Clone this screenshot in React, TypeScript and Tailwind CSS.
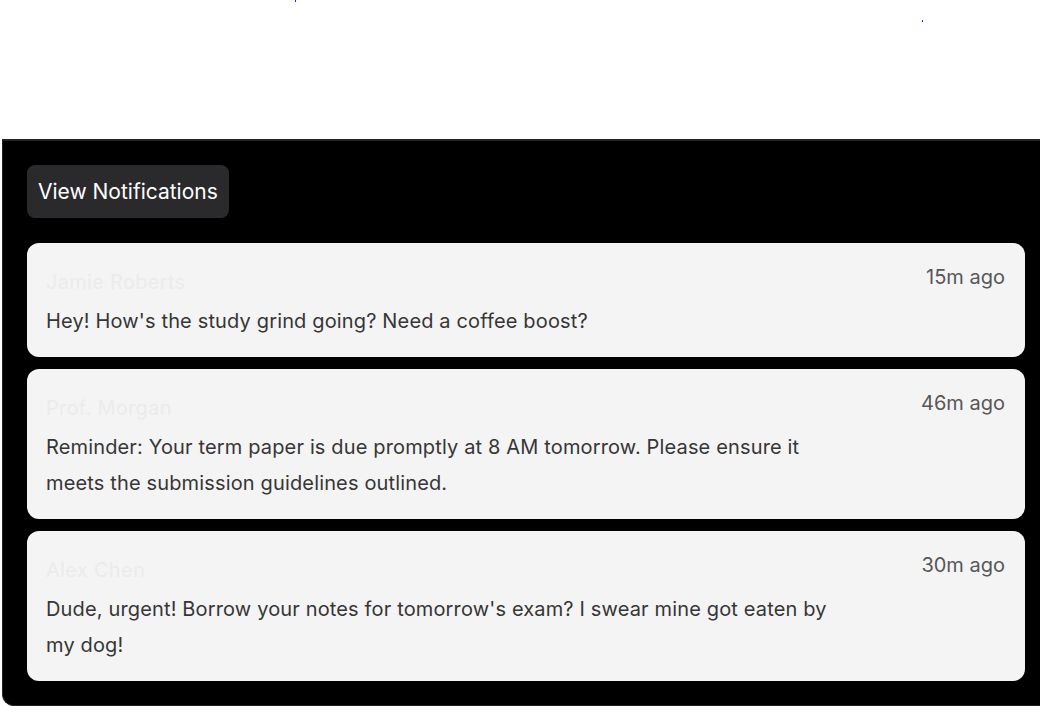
import React from 'react'

// Notification feed panel

interface Notice {
  id: number
  sender: string
  message: string
  time: string
}

const NOTICES: Notice[] = [
  {
    id: 1,
    sender: 'Jamie Roberts',
    message: "Hey! How's the study grind going? Need a coffee boost?",
    time: '15m ago',
  },
  {
    id: 2,
    sender: 'Prof. Morgan',
    message:
      'Reminder: Your term paper is due promptly at 8 AM tomorrow. Please ensure it meets the submission guidelines outlined.',
    time: '46m ago',
  },
  {
    id: 3,
    sender: 'Alex Chen',
    message:
      "Dude, urgent! Borrow your notes for tomorrow's exam? I swear mine got eaten by my dog!",
    time: '30m ago',
  },
]

function NoticeCard({ notice }: { notice: Notice }) {
  return (
    <div className="flex justify-between rounded-xl bg-[#f4f4f4] pl-[19px] pr-5 pt-5 pb-[18px]">
      <div className="max-w-[800px]">
        <div className="mt-[5px] text-xl leading-7 tracking-[0.3px] text-[#ebebeb]">{notice.sender}</div>
        <p className="mt-[7px] text-xl leading-9 tracking-[0.15px] text-[#363636]">{notice.message}</p>
      </div>
      <div className="text-xl leading-7 text-[#575757] whitespace-nowrap">{notice.time}</div>
    </div>
  )
}

export default function App() {
  return (
    <div
      className="relative h-[717px] w-[1040px] overflow-hidden bg-white"
      style={{ fontFamily: 'Inter, "Noto Sans", sans-serif' }}
    >
      {/* stray dots in the reference */}
      <span className="absolute left-[295px] top-0 h-[2px] w-px bg-[#2020ff]" />
      <span className="absolute left-[922px] top-[20px] h-[2px] w-px bg-[#2020ff]" />

      <div className="ml-[2px] mt-[139px] w-[1047px] rounded-bl-xl border-t-2 border-l border-b border-[#242424] bg-black p-6">
        <button className="h-[53px] rounded-lg bg-[#2a2a2c] px-[11px] text-[21px] leading-7 text-white">
          View Notifications
        </button>
        <div className="mt-[25px] flex flex-col gap-3">
          {NOTICES.map((n) => (
            <NoticeCard key={n.id} notice={n} />
          ))}
        </div>
      </div>
    </div>
  )
}
